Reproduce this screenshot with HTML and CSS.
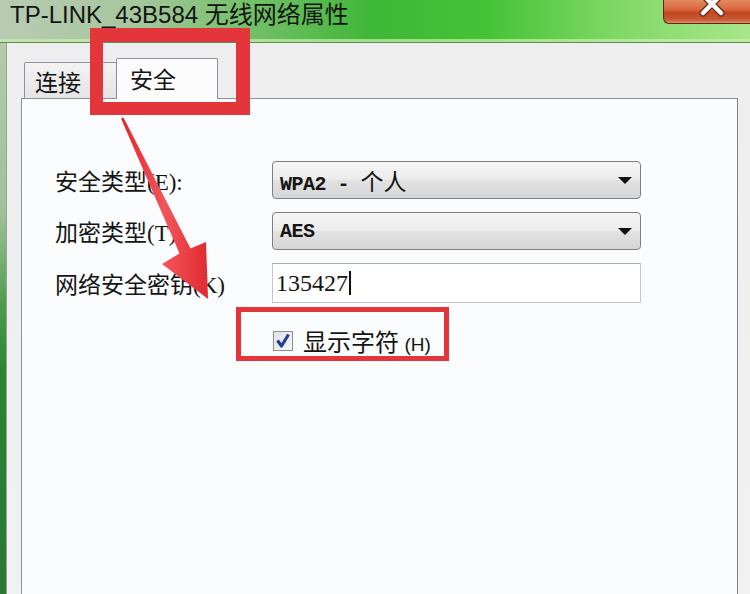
FILE: index.html
```html
<!DOCTYPE html>
<html lang="zh-CN">
<head>
    <meta charset="UTF-8">
    <meta name="viewport" content="width=device-width, initial-scale=1.0">
    <title>TP-LINK_43B584 无线网络属性</title>
    <link rel="stylesheet" href="styles.css">
</head>
<body>
    <div class="window">
        <div class="titlebar">
            <span class="title">TP-LINK_43B584 无线网络属性</span>
            <div class="close-btn">
                <svg width="87" height="24" viewBox="0 0 87 24">
                    <path d="M39 -5 L57 13 M57 -5 L39 13" stroke="#6a2612" stroke-width="7" stroke-linecap="round"/>
                    <path d="M39 -5 L57 13 M57 -5 L39 13" stroke="#ffffff" stroke-width="4.5" stroke-linecap="round"/>
                </svg>
            </div>
        </div>
        <div class="frame">
            <div class="frame-edge"></div>
            <div class="dialog">
                <div class="tabs">
                    <div class="tab">连接</div>
                    <div class="tab active">安全</div>
                </div>
                <div class="panel">
                    <div class="form-grid">
                        <label class="field-label">安全类型(E):</label>
                        <div class="combo">
                            <span class="combo-text">WPA2 - <span class="wide">个人</span></span>
                            <i class="drop"></i>
                        </div>

                        <label class="field-label">加密类型(T):</label>
                        <div class="combo">
                            <span class="combo-text">AES</span>
                            <i class="drop"></i>
                        </div>

                        <label class="field-label">网络安全密钥(K)</label>
                        <div class="textbox">
                            <span class="textbox-value">135427</span><span class="caret"></span>
                        </div>
                    </div>
                    <div class="show-chars">
                        <span class="checkbox">
                            <svg width="16" height="17" viewBox="0 0 16 17">
                                <path d="M2.5 8.5 L6.5 14 L13.5 2.5" fill="none" stroke="#243f96" stroke-width="3.2" stroke-linejoin="round"/>
                            </svg>
                        </span>
                        <span class="check-label">显示字符 <span class="hotkey">(H)</span></span>
                    </div>
                </div>
            </div>
            <div class="frame-right"></div>
        </div>
    </div>

    <!-- annotations drawn over the screenshot -->
    <div class="mark mark-tab"></div>
    <div class="mark mark-check"></div>
    <svg class="arrow" width="105" height="195" viewBox="110 110 105 195">
        <defs>
            <linearGradient id="arrowFill" x1="0" y1="0" x2="1" y2="0">
                <stop offset="0" stop-color="#e3262d"/>
                <stop offset="0.5" stop-color="#f2555a"/>
                <stop offset="1" stop-color="#e02a30"/>
            </linearGradient>
        </defs>
        <polygon points="121,118.5 123.5,117.5 190.5,248.5 206,242 208,299 162,264 179.5,253.5" fill="url(#arrowFill)"/>
    </svg>
</body>
</html>
```

FILE: styles.css
```css
body {
    margin: 0;
    width: 750px;
    height: 594px;
    overflow: hidden;
    position: relative;
    background: #f0f0f0;
    font-family: "Liberation Sans", "Noto Sans CJK SC", sans-serif;
    color: #141414;
}
.window {
    display: flex;
    flex-direction: column;
    width: 750px;
    height: 594px;
}
.titlebar {
    height: 42px;
    display: flex;
    align-items: flex-start;
    padding-left: 10px;
    background: linear-gradient(to right, #b9cbb3 0%, #a6c79e 18%, #78c06c 32%, #3fb737 50%, #45c336 65%, #7fd865 82%, #a9e68a 100%);
    box-shadow: inset 0 -3px 0 rgba(200, 240, 170, 0.7);
    border-bottom: 1px solid #5e8d57;
}
.title {
    font-size: 24px;
    line-height: 28px;
    margin-top: 1px;
    white-space: nowrap;
}
.close-btn {
    margin-left: auto;
    width: 87px;
    height: 24px;
    box-sizing: border-box;
    border: 1px solid #5e2716;
    border-top: none;
    border-right: none;
    border-bottom-left-radius: 6px;
    background: linear-gradient(to bottom, #e38a62 0%, #d9683f 40%, #c4461d 55%, #c55a35 85%, #e0906a 100%);
    overflow: hidden;
}
.close-btn svg {
    display: block;
}
.frame {
    flex: 1;
    display: flex;
}
.frame-edge {
    flex: none;
    width: 6px;
    background: linear-gradient(to bottom, #b3cbab 0px, #9fc198 170px, #4f9e50 260px, #2c8232 330px, #2a7a30 100%);
}
.dialog {
    flex: none;
    width: 717px;
    display: flex;
    flex-direction: column;
    border-left: 1px solid #96a496;
    padding: 15px 0 0 14px;
    background: linear-gradient(to bottom, #eeeeee, #f1f1f1);
}
.frame-right {
    flex: 1;
    background: linear-gradient(to bottom, #eeeeee, #f1f1f1);
}
.tabs {
    display: flex;
    align-items: flex-end;
    height: 41px;
    margin-bottom: -1px;
}
.tab {
    height: 37px;
    width: 94px;
    box-sizing: border-box;
    margin-left: 3px;
    padding-left: 10px;
    display: flex;
    align-items: center;
    border: 1px solid #8e8f9f;
    border-bottom: none;
    border-radius: 2px 2px 0 0;
    background: linear-gradient(to bottom, #f3f3f3, #e4e4e4);
    font-family: "Noto Sans CJK SC", sans-serif;
    font-size: 23px;
}
.tab.active {
    position: relative;
    z-index: 1;
    height: 41px;
    width: 102px;
    margin-left: -2px;
    padding-left: 13px;
    padding-bottom: 3px;
    background: #fcfcfd;
}
.panel {
    flex: 1;
    border: 1px solid #8e8f9f;
    border-right-color: #7d7e90;
    border-bottom: none;
    background: #fbfcfd;
    padding: 62px 0 0 33px;
}
.form-grid {
    display: grid;
    grid-template-columns: 217px 369px;
    grid-template-rows: 38px 38px 40px;
    row-gap: 13px;
    align-items: center;
}
.field-label {
    font-family: "Liberation Serif", "Noto Sans CJK SC", serif;
    font-size: 23px;
    white-space: nowrap;
}
.combo {
    height: 38px;
    box-sizing: border-box;
    display: flex;
    align-items: center;
    padding: 0 7px 0 7px;
    border: 1px solid #7f7f7f;
    border-radius: 4px;
    background: linear-gradient(to bottom, #f6f6f6 0%, #ececec 48%, #e2e2e2 52%, #d6d6d6 100%);
}
.combo-text {
    font-family: "Liberation Mono", "Noto Sans CJK SC", monospace;
    font-size: 20px;
    letter-spacing: -0.5px;
    font-weight: bold;
    white-space: pre;
}
.combo-text .wide {
    font-family: "Noto Sans CJK SC", sans-serif;
    font-size: 23px;
    font-weight: normal;
    letter-spacing: 0;
}
.drop {
    margin-left: auto;
    margin-right: 1px;
    width: 0;
    height: 0;
    border-left: 7px solid transparent;
    border-right: 7px solid transparent;
    border-top: 7px solid #111111;
}
.textbox {
    height: 40px;
    box-sizing: border-box;
    display: flex;
    align-items: center;
    padding-left: 3px;
    border: 1px solid #c2c6cf;
    border-top-color: #a9acb5;
    background: #ffffff;
}
.textbox-value {
    font-family: "Liberation Serif", serif;
    font-size: 24px;
}
.caret {
    width: 2px;
    height: 24px;
    margin-left: 1px;
    background: #111111;
}
.show-chars {
    display: flex;
    align-items: center;
    margin: 20px 0 0 218px;
}
.checkbox {
    width: 20px;
    height: 20px;
    box-sizing: border-box;
    display: flex;
    align-items: center;
    justify-content: center;
    border: 1px solid #8f8f8f;
    background: linear-gradient(to bottom right, #dfe2e8, #f6f7f9);
}
.checkbox svg {
    display: block;
}
.check-label {
    margin-left: 10px;
    font-family: "Noto Sans CJK SC", sans-serif;
    font-size: 24px;
    white-space: nowrap;
}
.hotkey {
    font-family: "Liberation Sans", sans-serif;
    font-size: 19px;
}
.mark {
    position: absolute;
    box-sizing: border-box;
    border-style: solid;
    border-color: #e2363a;
}
.mark-tab {
    left: 90px;
    top: 28px;
    width: 160px;
    height: 87px;
    border-width: 14px 14px 13px 13px;
}
.mark-check {
    left: 236px;
    top: 307px;
    width: 213px;
    height: 54px;
    border-width: 5px;
}
.arrow {
    position: absolute;
    left: 110px;
    top: 110px;
}
```
